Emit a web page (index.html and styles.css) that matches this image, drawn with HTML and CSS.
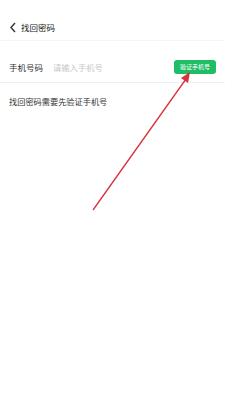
FILE: index.html
```html
<!DOCTYPE html>
<html lang="zh-CN">
<head>
	<meta charset="UTF-8">
	<title>找回密码</title>
	<link rel="stylesheet" href="styles.css">
</head>
<body>
	<div class="page">
		<div class="header">
			<svg class="back" width="8" height="11" viewBox="0 0 8 11">
				<path d="M6 1 L2 5.5 L6 10" fill="none" stroke="#333" stroke-width="1.4"/>
			</svg>
			<span class="title">找回密码</span>
		</div>
		<div class="row">
			<span class="label">手机号码</span>
			<span class="placeholder">请输入手机号</span>
			<span class="btn">验证手机号</span>
		</div>
		<p class="tip">找回密码需要先验证手机号</p>
		<svg class="arrow" width="225" height="400" viewBox="0 0 225 400">
			<line x1="93" y1="210" x2="186" y2="79" stroke="#d8333a" stroke-width="1.3"/>
			<polygon points="190,72 181,78 188,83" fill="#d8333a"/>
		</svg>
	</div>
</body>
</html>
```

FILE: styles.css
```css
* {
	margin: 0;
	padding: 0;
}
body {
	background: #fff;
	font-family: "Noto Sans CJK SC", "Noto Sans", sans-serif;
	color: #333;
}
.page {
	position: relative;
	width: 225px;
	height: 400px;
}
.header {
	display: flex;
	align-items: center;
	height: 20px;
	padding: 17px 0 3px 9px;
	border-bottom: 1px solid #f6f6f6;
}
.back {
	margin-right: 4px;
}
.title {
	font-size: 8.5px;
	color: #222;
}
.row {
	display: flex;
	align-items: center;
	height: 31px;
	padding: 10px 9px 0;
	border-bottom: 1px solid #eeeeee;
}
.label {
	font-size: 8.5px;
	width: 44px;
	color: #333;
}
.placeholder {
	flex: 1;
	font-size: 8.3px;
	color: #c8c8c8;
}
.btn {
	width: 42px;
	height: 14px;
	line-height: 14px;
	text-align: center;
	background: #20bd67;
	color: #fff;
	font-size: 6px;
	border-radius: 3px;
}
.tip {
	padding: 12px 9px 0;
	font-size: 8.2px;
	color: #333;
}
.arrow {
	position: absolute;
	left: 0;
	top: 0;
}
```
